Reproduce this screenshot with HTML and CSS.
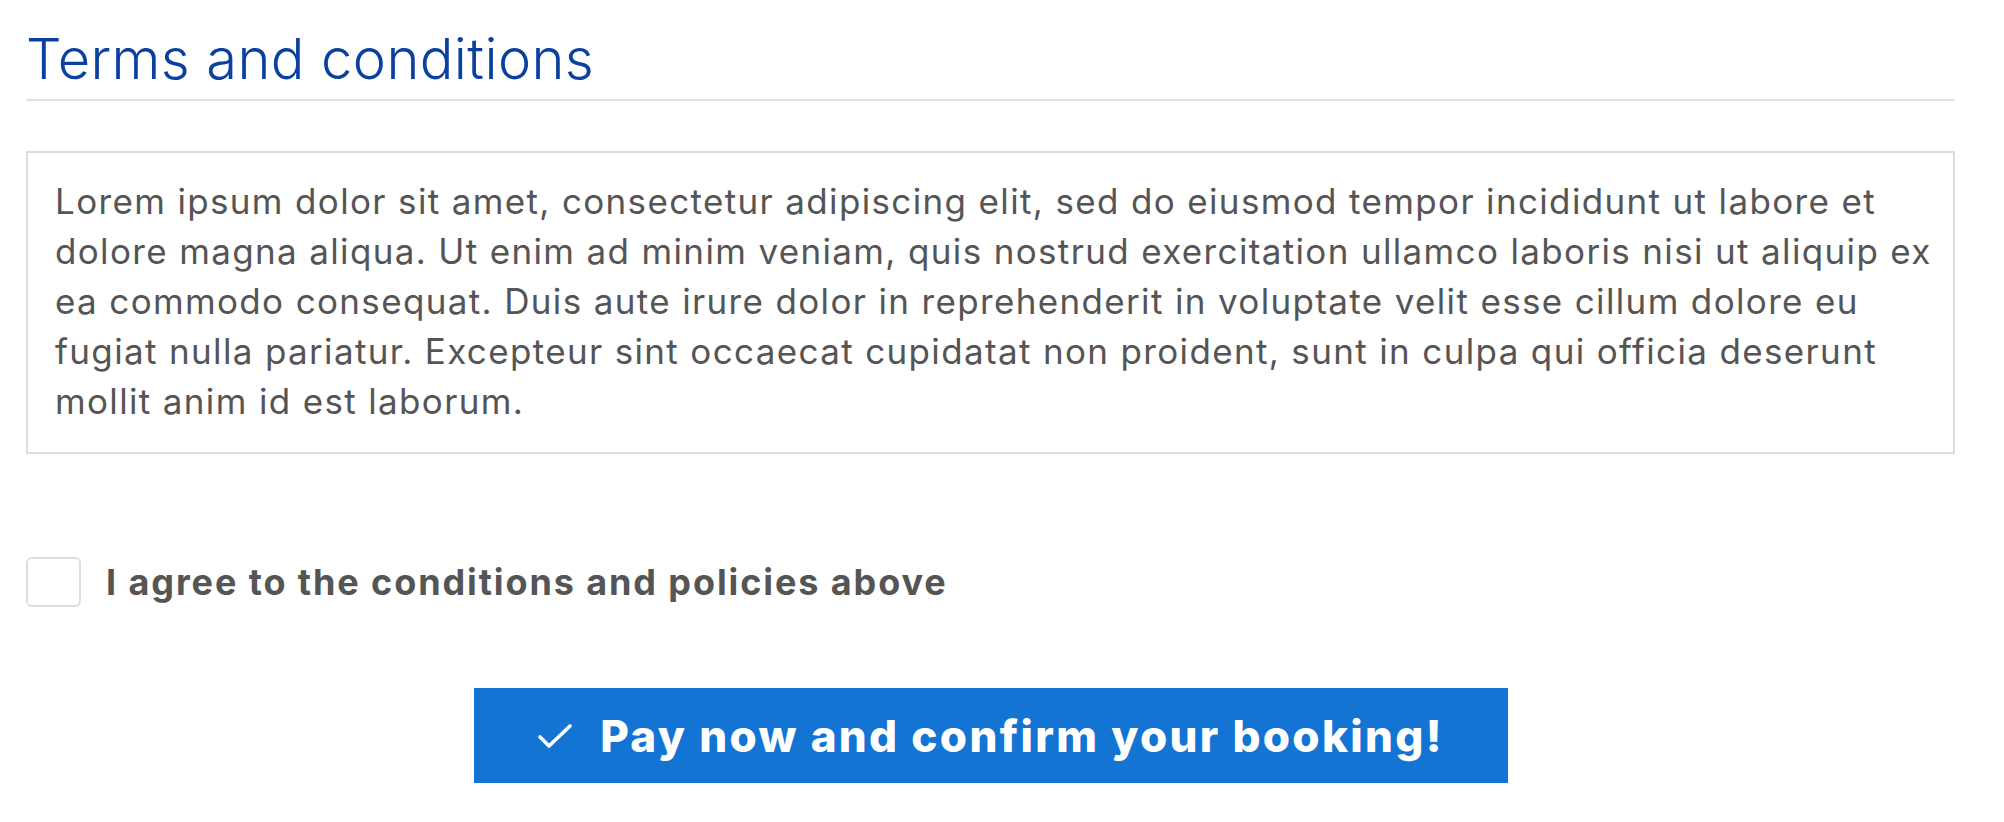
FILE: index.html
```html
<!DOCTYPE html>
<html lang="en">
<head>
<meta charset="utf-8">
<title>Terms and conditions</title>
<link rel="stylesheet" href="styles.css">
</head>
<body>
<main class="page">
  <h1 class="title">Terms and conditions</h1>
  <div class="terms-box">
    <p class="terms-text">Lorem ipsum dolor sit amet, consectetur adipiscing elit, sed do eiusmod tempor incididunt ut labore et dolore magna aliqua. Ut enim ad minim veniam, quis nostrud exercitation ullamco laboris nisi ut aliquip ex ea commodo consequat. Duis aute irure dolor in reprehenderit in voluptate velit esse cillum dolore eu fugiat nulla pariatur. Excepteur sint occaecat cupidatat non proident, sunt in culpa qui officia deserunt mollit anim id est laborum.</p>
  </div>
  <label class="agree">
    <span class="checkbox"></span>
    <span class="agree-text">I agree to the conditions and policies above</span>
  </label>
  <div class="actions">
    <button class="pay-btn" type="button">
      <svg class="check" width="36" height="28" viewBox="0 0 36 28" aria-hidden="true"><path d="M3 15 L12 24 L33 4" fill="none" stroke="#fff" stroke-width="3.6" stroke-linecap="round" stroke-linejoin="round"/></svg>
      <span>Pay now and confirm your booking!</span>
    </button>
  </div>
</main>
</body>
</html>
```
FILE: styles.css
```css
* { box-sizing: border-box; }
html, body { margin: 0; padding: 0; background: #fff; }
body { font-family: Inter, "Noto Sans", sans-serif; color: #555; }
.page {
  padding: 0 49px 0 26px;
}
.title {
  margin: 0;
  padding-top: 26px;
  padding-bottom: 6px;
  font-size: 56px;
  line-height: 67px;
  font-weight: 300;
  letter-spacing: 0.4px;
  color: #0a409f;
  border-bottom: 2px solid #e3e3e3;
}
.terms-box {
  margin-top: 50px;
  border: 2px solid #dcdcdc;
  padding: 23px 10px 26px 27px;
}
.terms-text {
  margin: 0;
  font-size: 35px;
  line-height: 50px;
  letter-spacing: 1.35px;
  color: #555;
}
.agree {
  margin-top: 103px;
  display: flex;
  align-items: center;
  gap: 25px;
}
.checkbox {
  width: 55px;
  height: 50px;
  border: 2px solid #dddddd;
  border-radius: 6px;
  background: #fff;
  flex: none;
}
.agree-text {
  font-size: 36px;
  line-height: 44px;
  font-weight: 700;
  letter-spacing: 1.9px;
  color: #555;
}
.actions {
  margin-top: 81px;
  display: flex;
  justify-content: center;
}
.pay-btn {
  width: 1034px;
  height: 95px;
  background: #1474d4;
  border: none;
  color: #fff;
  font-family: Inter, "Noto Sans", sans-serif;
  font-size: 44px;
  font-weight: 800;
  letter-spacing: 2.3px;
  display: flex;
  align-items: center;
  justify-content: center;
  gap: 27px;
  padding: 0;
}
.check { flex: none; }
```
